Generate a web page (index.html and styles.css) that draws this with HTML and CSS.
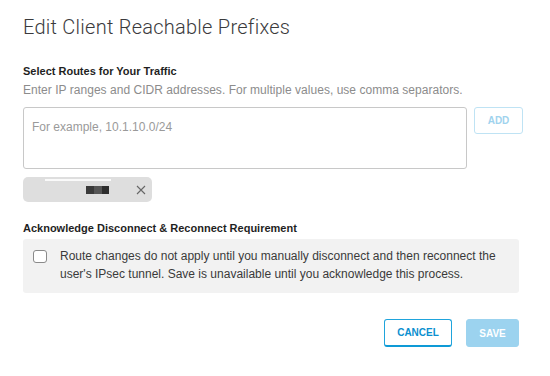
FILE: index.html
```
<!DOCTYPE html>
<html>
<head>
<meta charset="utf-8">
<link rel="stylesheet" href="styles.css">
</head>
<body>
<div class="dialog">
  <h1 class="title">Edit Client Reachable Prefixes</h1>
  <div class="label label-routes">Select Routes for Your Traffic</div>
  <div class="help">Enter IP ranges and CIDR addresses. For multiple values, use comma separators.</div>
  <div class="input-row">
    <div class="textarea"><span class="placeholder">For example, 10.1.10.0/24</span></div>
    <button class="btn-add">ADD</button>
  </div>
  <div class="chip">
    <span class="chip-line"></span>
    <span class="chip-redact"></span>
    <svg class="chip-x" width="10" height="10" viewBox="0 0 10 10"><path d="M1 1 L9 9 M9 1 L1 9" stroke="#666" stroke-width="1.1" fill="none"/></svg>
  </div>
  <div class="label label-ack">Acknowledge Disconnect &amp; Reconnect Requirement</div>
  <div class="ack-box">
    <span class="checkbox"></span>
    <p class="ack-text">Route changes do not apply until you manually disconnect and then reconnect the user's IPsec tunnel. Save is unavailable until you acknowledge this process.</p>
  </div>
  <div class="footer">
    <button class="btn-cancel">CANCEL</button>
    <button class="btn-save">SAVE</button>
  </div>
</div>
</body>
</html>
```
FILE: styles.css
```
html, body {
  margin: 0;
  padding: 0;
  background: #fff;
}
body {
  width: 550px;
  height: 376px;
  overflow: hidden;
  font-family: "Liberation Sans", Arial, sans-serif;
}
.dialog {
  padding: 15px 31px 0 23px;
}
.title {
  margin: 0;
  font-family: Roboto, "Liberation Sans", sans-serif;
  font-weight: 300;
  font-size: 20px;
  line-height: 24px;
  color: #3a3a3c;
  letter-spacing: 0.25px;
}
.label {
  font-size: 11px;
  font-weight: bold;
  line-height: 14px;
  color: #1f1f1f;
}
.label-routes {
  margin-top: 25px;
}
.help {
  margin-top: 4px;
  font-size: 12px;
  line-height: 16px;
  color: #8c8c8c;
  letter-spacing: 0.03px;
}
.input-row {
  display: flex;
  align-items: flex-start;
  gap: 7px;
  margin-top: 9px;
  width: 500px;
}
.textarea {
  flex: none;
  width: 444px;
  height: 62px;
  box-sizing: border-box;
  border: 1px solid #c8c8c8;
  border-radius: 3px;
  padding: 9px 8px;
}
.placeholder {
  font-size: 12px;
  line-height: 16px;
  color: #9a9a9a;
}
.btn-add {
  flex: none;
  width: 49px;
  height: 27px;
  box-sizing: border-box;
  border: 1px solid #bfe3f4;
  border-radius: 3px;
  background: #fff;
  color: #9fd3ee;
  font-family: "Liberation Sans", Arial, sans-serif;
  font-weight: bold;
  font-size: 10px;
  padding: 0;
}
.chip {
  position: relative;
  margin-top: 8px;
  width: 129px;
  height: 25px;
  border-radius: 5px;
  background: #dedede;
  display: flex;
  align-items: center;
}
.chip-line {
  position: absolute;
  left: 22px;
  top: 2px;
  width: 66px;
  height: 2px;
  background: #fafafa;
}
.chip-redact {
  margin-left: 63px;
  width: 23px;
  height: 8px;
  background: linear-gradient(90deg, #3a3a3a 0 35%, #555 35% 70%, #2e2e2e 70%);
}
.chip-x {
  margin-left: 27px;
}
.label-ack {
  margin-top: 19px;
}
.ack-box {
  margin-top: 4px;
  width: 496px;
  box-sizing: border-box;
  background: #f2f2f2;
  border-radius: 3px;
  padding: 8px 10px 10px 10px;
  display: flex;
  align-items: flex-start;
  gap: 13px;
}
.checkbox {
  flex: none;
  width: 14px;
  height: 13px;
  box-sizing: border-box;
  border: 1.5px solid #8a8a8a;
  border-radius: 3px;
  background: #fff;
  margin-top: 3px;
}
.ack-text {
  margin: 0;
  font-size: 12px;
  line-height: 18px;
  color: #3a3a3a;
}
.footer {
  margin-top: 26px;
  width: 496px;
  display: flex;
  justify-content: flex-end;
  gap: 14px;
}
.footer button {
  height: 28px;
  box-sizing: border-box;
  border-radius: 3px;
  font-family: "Liberation Sans", Arial, sans-serif;
  font-weight: bold;
  font-size: 10px;
  padding: 0;
}
.btn-cancel {
  width: 68px;
  background: #fff;
  border: 1px solid #1fa4dc;
  border-bottom: 2px solid #0e9ad6;
  color: #0b8fcf;
}
.btn-save {
  width: 53px;
  background: #9cd3ef;
  border: 1px solid #9cd3ef;
  color: #fff;
}
```
